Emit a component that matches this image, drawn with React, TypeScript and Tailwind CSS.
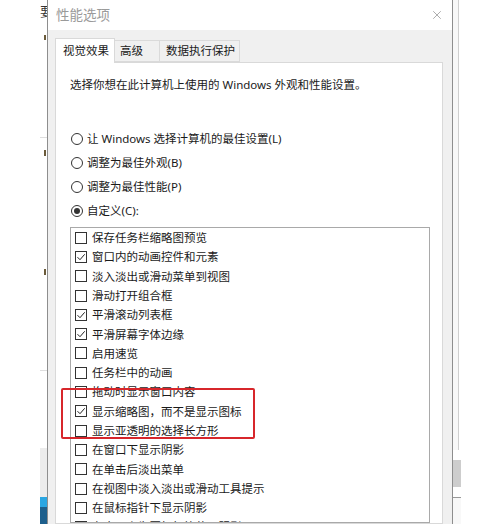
import { X } from "lucide-react";

const items: [string, boolean][] = [
  ["保存任务栏缩略图预览", false],
  ["窗口内的动画控件和元素", true],
  ["淡入淡出或滑动菜单到视图", false],
  ["滑动打开组合框", false],
  ["平滑滚动列表框", true],
  ["平滑屏幕字体边缘", true],
  ["启用速览", false],
  ["任务栏中的动画", false],
  ["拖动时显示窗口内容", false],
  ["显示缩略图，而不是显示图标", true],
  ["显示亚透明的选择长方形", false],
  ["在窗口下显示阴影", false],
  ["在单击后淡出菜单", false],
  ["在视图中淡入淡出或滑动工具提示", false],
  ["在鼠标指针下显示阴影", false],
  ["在桌面上为图标标签使用阴影", false],
];

const radios: [string, boolean][] = [
  ["让 Windows 选择计算机的最佳设置(L)", false],
  ["调整为最佳外观(B)", false],
  ["调整为最佳性能(P)", false],
  ["自定义(C):", true],
];

function Radio({ checked }: { checked: boolean }) {
  return (
    <span className="w-[12px] h-[12px] rounded-full border border-[#333] bg-white flex items-center justify-center shrink-0">
      {checked && <span className="w-[6px] h-[6px] rounded-full bg-[#333]" />}
    </span>
  );
}

function Checkbox({ checked }: { checked: boolean }) {
  return (
    <span className="w-[12px] h-[12px] border border-[#333] bg-white flex items-center justify-center shrink-0">
      {checked && (
        <svg width="10" height="10" viewBox="0 0 10 10">
          <path d="M1.5 5.2 L4 7.7 L8.7 2.3" fill="none" stroke="#222" strokeWidth="1" />
        </svg>
      )}
    </span>
  );
}

export default function App() {
  return (
    <div className="relative w-[500px] h-[524px] overflow-hidden bg-white flex font-['Noto_Sans','Noto_Sans_CJK_SC',sans-serif] text-[#1a1a1a]">
      {/* background window behind the dialog, left side */}
      <div className="w-[47px] shrink-0 flex">
        <div className="w-[40px]" />
        <div className="w-[7px] flex flex-col overflow-hidden">
          <div className="h-[4px] shrink-0" />
          <div className="h-[14px] shrink-0 text-[13px] leading-[14px] text-[#333]">要</div>
          <div className="h-[17px] shrink-0" />
          <div className="h-[5px] shrink-0 w-[2px] ml-[4px] bg-[#6b5b3a]" />
          <div className="h-[97px] shrink-0" />
          <div className="h-[1px] shrink-0 bg-[#dedede]" />
          <div className="h-[12px] shrink-0" />
          <div className="h-[6px] shrink-0 w-[2px] ml-[4px] bg-[#6b5b3a]" />
          <div className="h-[113px] shrink-0" />
          <div className="h-[6px] shrink-0 w-[2px] ml-[4px] bg-[#6b5b3a]" />
          <div className="h-[95px] shrink-0" />
          <div className="h-[1px] shrink-0 bg-[#dedede]" />
          <div className="h-[77px] shrink-0" />
          <div className="h-[49px] shrink-0 bg-[#ececec]" />
          <div className="h-[10px] shrink-0 bg-[#2aa6e2]" />
          <div className="flex-1 bg-[#1d5f8c]" />
        </div>
      </div>

      {/* dialog */}
      <div className="w-[406px] shrink-0 border-x border-[#8e8e8e] flex flex-col min-h-0">
        <div className="h-[30px] shrink-0 bg-white flex items-center justify-between pl-[8px] pr-[8px]">
          <span className="text-[13.5px] text-[#9a9a9a]">性能选项</span>
          <X className="w-[14px] h-[14px] text-[#8a8a8a]" strokeWidth={1.2} />
        </div>
        <div className="flex-1 min-h-0 overflow-hidden bg-[#f0f0f0] pl-[7px] pr-[9px] pt-[8px] flex flex-col">
          <div className="flex items-end h-[24px] shrink-0 text-[11.5px] relative z-10">
            <div className="w-[60px] h-[25px] bg-white border border-b-0 border-[#d9d9d9] pl-[7px] flex items-center -mb-[1px]">
              视觉效果
            </div>
            <div className="w-[45px] h-[22px] bg-[#f0f0f0] border border-l-0 border-[#dadada] pl-[5px] flex items-center">
              高级
            </div>
            <div className="w-[80px] h-[22px] bg-[#f0f0f0] border border-l-0 border-[#dadada] pl-[6px] flex items-center">
              数据执行保护
            </div>
          </div>
          <div className="flex-1 min-h-0 bg-white border border-[#d9d9d9] pl-[14px] pr-[12px] pt-[13px] flex flex-col">
            <p className="shrink-0 text-[11.5px] leading-[18px]">选择你想在此计算机上使用的 Windows 外观和性能设置。</p>
            <div className="mt-[33px] shrink-0 flex flex-col text-[11.5px]">
              {radios.map(([label, checked]) => (
                <div key={label} className="h-[24px] flex items-center gap-[4px] pl-[1px]">
                  <Radio checked={checked} />
                  <span>{label}</span>
                </div>
              ))}
            </div>
            <div className="mt-[4px] flex-1 min-h-0 overflow-hidden border border-[#a9a9a9] bg-white flex flex-col pl-[4px] text-[11.5px]">
              {items.map(([label, checked]) => (
                <div key={label} className="h-[19.3px] shrink-0 flex items-center gap-[5px]">
                  <Checkbox checked={checked} />
                  <span className="whitespace-nowrap">{label}</span>
                </div>
              ))}
            </div>
          </div>
        </div>
      </div>

      {/* background window, right side */}
      <div className="flex-1 flex">
        <div className="w-[8px] flex flex-col">
          <div className="h-[450px] shrink-0 bg-[#f8f8f8] border-r border-[#cfcfcf] mr-[2px]" />
          <div className="h-[10px] shrink-0" />
          <div className="h-[27px] shrink-0 bg-[#cdcdcd]" />
          <div className="h-[10px] shrink-0" />
          <div className="h-[1px] shrink-0 bg-[#999]" />
          <div className="flex-1 bg-[#f8f8f8]" />
        </div>
      </div>

      {/* red annotation box */}
      <div className="absolute left-[61px] top-[388px] w-[194px] h-[51px] border-2 border-[#d7262b] rounded-[2px]" />
    </div>
  );
}
